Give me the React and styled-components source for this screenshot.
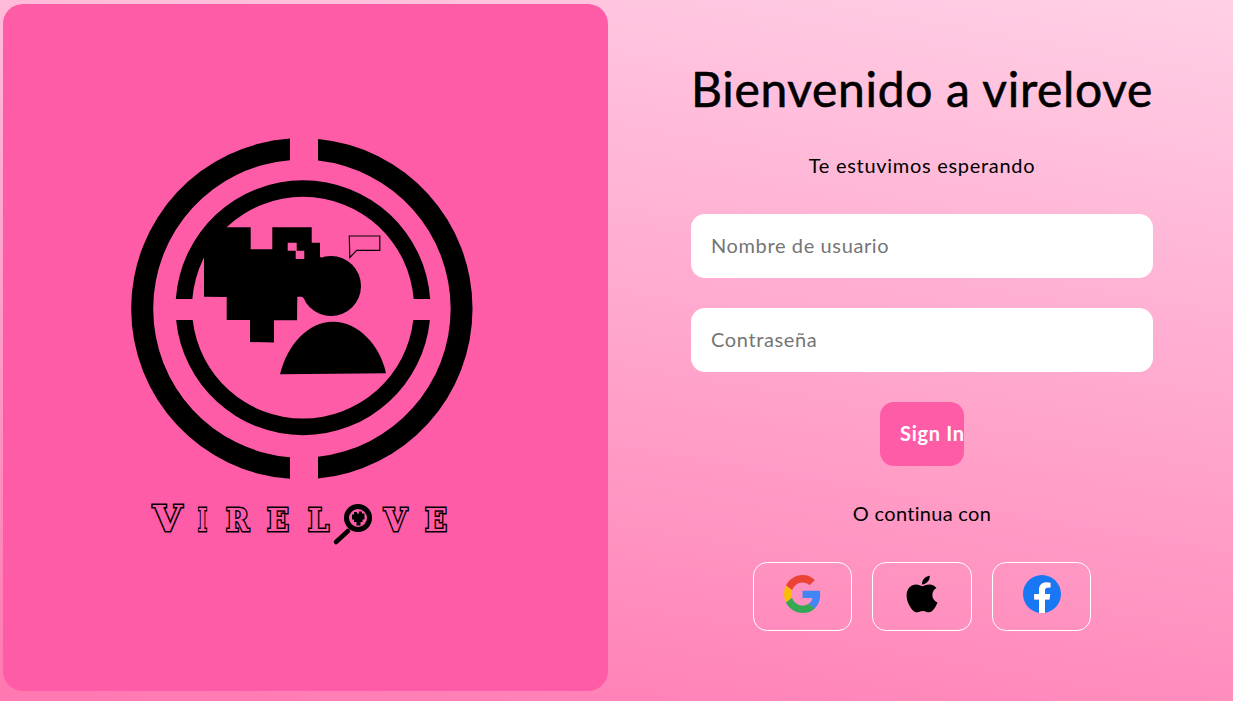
import React from 'react'
import styled, { createGlobalStyle } from 'styled-components'
import { FaApple } from 'react-icons/fa'

const GlobalStyle = createGlobalStyle`
  html, body {
    margin: 0;
    padding: 0;
  }
  body {
    font-family: "Lato", "Open Sans", sans-serif;
  }
`

const Page = styled.div`
  display: flex;
  box-sizing: border-box;
  width: 1233px;
  height: 701px;
  padding: 4px 0 10px 3px;
  overflow: hidden;
  background: linear-gradient(190deg, #ffd0e6 0%, #ff78b0 100%);
`

const LogoPanel = styled.div`
  display: flex;
  justify-content: center;
  align-items: flex-start;
  box-sizing: border-box;
  width: 605px;
  height: 687px;
  padding-top: 126px;
  border-radius: 20px;
  background: #ff5ca8;
`

const LogoSvg = styled.svg`
  display: block;
  width: 371px;
  height: 420px;
`

const WordLetter = styled.text`
  font-family: "DejaVu Serif", "Liberation Serif", serif;
  font-weight: 700;
  fill: #ff5ca8;
  stroke: #000;
  stroke-width: 3px;
  stroke-linejoin: miter;
  paint-order: stroke fill;
`

const FormColumn = styled.div`
  display: flex;
  flex-direction: column;
  align-items: center;
  width: 462px;
  margin-left: 83px;
  padding-top: 53px;
`

const Title = styled.h1`
  margin: 0;
  width: 100%;
  font-size: 48px;
  line-height: 64px;
  font-weight: 400;
  letter-spacing: 0.65px;
  -webkit-text-stroke: 0.6px #000;
  white-space: nowrap;
  text-align: center;
  color: #000;
`

const Subtitle = styled.p`
  margin: 30px 0 0;
  font-size: 20px;
  line-height: 28px;
  letter-spacing: 0.7px;
  color: #000;
`

const TextInput = styled.input`
  display: block;
  box-sizing: border-box;
  width: 100%;
  height: 64px;
  margin-top: ${(p) => p.$top}px;
  padding: 0 20px 2px;
  border: 0;
  border-radius: 14px;
  outline: none;
  background: #fff;
  font-family: inherit;
  font-size: 20px;
  letter-spacing: 0.62px;
  &::placeholder {
    color: #757575;
    opacity: 1;
  }
`

const SignIn = styled.button`
  box-sizing: border-box;
  width: 84px;
  height: 64px;
  margin-top: 30px;
  padding: 0 0 2px 20px;
  border: 0;
  border-radius: 14px;
  overflow: hidden;
  background: #ff5ca8;
  color: #fff;
  font-family: inherit;
  font-size: 20px;
  font-weight: 700;
  letter-spacing: 0.7px;
  text-align: left;
  white-space: nowrap;
`

const AltLabel = styled.p`
  margin: 33px 0 0;
  font-size: 20px;
  line-height: 28px;
  letter-spacing: 0.3px;
  color: #000;
`

const SocialRow = styled.div`
  display: flex;
  gap: 20px;
  margin-top: 35px;
`

const SocialButton = styled.button`
  display: flex;
  align-items: center;
  justify-content: center;
  box-sizing: border-box;
  width: ${(p) => p.$w || 99}px;
  height: 69px;
  padding: 0 0 5px;
  border: 1px solid #fff;
  border-radius: 14px;
  background: transparent;
`

const GoogleIcon = () => (
  <svg width="37" height="38" viewBox="0 0 48 48" preserveAspectRatio="none">
    <path fill="#EA4335" d="M24 9.5c3.54 0 6.71 1.22 9.21 3.6l6.85-6.85C35.9 2.38 30.47 0 24 0 14.62 0 6.51 5.38 2.56 13.22l7.98 6.19C12.43 13.72 17.74 9.5 24 9.5z" />
    <path fill="#4285F4" d="M46.98 24.55c0-1.57-.15-3.09-.38-4.55H24v9.02h12.94c-.58 2.96-2.26 5.48-4.78 7.18l7.73 6c4.51-4.18 7.09-10.36 7.09-17.65z" />
    <path fill="#FBBC05" d="M10.53 28.59c-.48-1.45-.76-2.99-.76-4.59s.27-3.14.76-4.59l-7.98-6.19C.92 16.46 0 20.12 0 24c0 3.88.92 7.54 2.56 10.78l7.97-6.19z" />
    <path fill="#34A853" d="M24 48c6.48 0 11.93-2.13 15.89-5.81l-7.73-6c-2.15 1.45-4.92 2.3-8.16 2.3-6.26 0-11.57-4.22-13.47-9.91l-7.98 6.19C6.51 42.62 14.62 48 24 48z" />
  </svg>
)

const FacebookIcon = () => (
  <svg width="38" height="38" viewBox="0 0 24 24">
    <path fill="#1877F2" d="M24 12.073c0-6.627-5.373-12-12-12s-12 5.373-12 12c0 5.99 4.388 10.954 10.125 11.854v-8.385H7.078v-3.47h3.047V9.43c0-3.007 1.792-4.669 4.533-4.669 1.312 0 2.686.235 2.686.235v2.953H15.83c-1.491 0-1.956.925-1.956 1.874v2.25h3.328l-.532 3.47h-2.796v8.385C19.612 23.027 24 18.062 24 12.073z" />
    <path fill="#fff" d="M16.671 15.543l.532-3.47h-3.328v-2.25c0-.949.465-1.874 1.956-1.874h1.513V4.996s-1.374-.235-2.686-.235c-2.741 0-4.533 1.662-4.533 4.669v2.642H7.078v3.47h3.047v8.385a12.13 12.13 0 003.75 0v-8.385z" />
  </svg>
)

const Logo = () => (
  <LogoSvg viewBox="120 130 371 420">
    {/* outer ring, cut at the top and bottom */}
    <path d="M290 138.6A170.5 170.5 0 0 0 290 478.8V457.2A149 149 0 0 1 290 160.2Z" />
    <path d="M318 139A170.5 170.5 0 0 1 318 478.500V456.800A149 149 0 0 0 318 160.600Z" />
    {/* inner ring, cut on the left and right */}
    <path d="M175.800 299A127.500 127.500 0 0 1 430.200 299H413.650A111 111 0 0 0 192.350 299Z" />
    <path d="M176.100 320A127.500 127.500 0 0 0 429.900 320H413.300A111 111 0 0 1 192.700 320Z" />

    <path d="M204 227.300H250.700V249.300H272.300V227.300H311.700V242.700H320V256.700L345 275 331 316 301.700 296.700H297.300L297 320.300H274V342.500L250 342V320H226.700V297L204 296.700Z" />
    <path fill="#ff5ca8" d="M287.700 242.700H296.700V250.700H304.300V259H295.700V250.700H287.700Z" />
    <circle cx="331" cy="286" r="30" />
    <path d="M280 374.300C287 345 308 321.700 333 321.700C358 321.700 380 345 386 373.300Z" />
    <path fill="#ff5ca8" stroke="#000" strokeWidth="1.2" d="M349.300 236H379.800V250.300H356.700L349.800 257.500Z" />

    <WordLetter x="153" y="531" fontSize="35" textLength="29" lengthAdjust="spacingAndGlyphs">V</WordLetter>
    <WordLetter x="198" y="531" fontSize="31" textLength="9" lengthAdjust="spacingAndGlyphs">I</WordLetter>
    <WordLetter x="226" y="531" fontSize="31" textLength="23" lengthAdjust="spacingAndGlyphs">R</WordLetter>
    <WordLetter x="267" y="531" fontSize="31" textLength="22" lengthAdjust="spacingAndGlyphs">E</WordLetter>
    <WordLetter x="308" y="531" fontSize="31" textLength="21" lengthAdjust="spacingAndGlyphs">L</WordLetter>
    <circle cx="358" cy="518" r="11.500" fill="#ff5ca8" stroke="#000" strokeWidth="5" />
    <path d="M348 531L336 542" stroke="#000" strokeWidth="4.500" strokeLinecap="round" />
    <path d="M352 514.500H354V512H357V513.500H359V511.500H362V513.500H364.500V519.500H362.500V522H360.500V525.500H356.500V522H354V519.500H352Z" />
    <WordLetter x="384" y="531" fontSize="31" textLength="23" lengthAdjust="spacingAndGlyphs">V</WordLetter>
    <WordLetter x="425" y="531" fontSize="31" textLength="22" lengthAdjust="spacingAndGlyphs">E</WordLetter>
  </LogoSvg>
)

const App = () => {
  return (
    <Page>
      <GlobalStyle />
      <LogoPanel>
        <Logo />
      </LogoPanel>
      <FormColumn>
        <Title>Bienvenido a virelove</Title>
        <Subtitle>Te estuvimos esperando</Subtitle>
        <TextInput $top={35} placeholder="Nombre de usuario" />
        <TextInput $top={30} placeholder="Contraseña" type="password" />
        <SignIn>Sign In</SignIn>
        <AltLabel>O continua con</AltLabel>
        <SocialRow>
          <SocialButton><GoogleIcon /></SocialButton>
          <SocialButton $w={100}><FaApple size={42} color="#000" /></SocialButton>
          <SocialButton><FacebookIcon /></SocialButton>
        </SocialRow>
      </FormColumn>
    </Page>
  )
}

export default App
